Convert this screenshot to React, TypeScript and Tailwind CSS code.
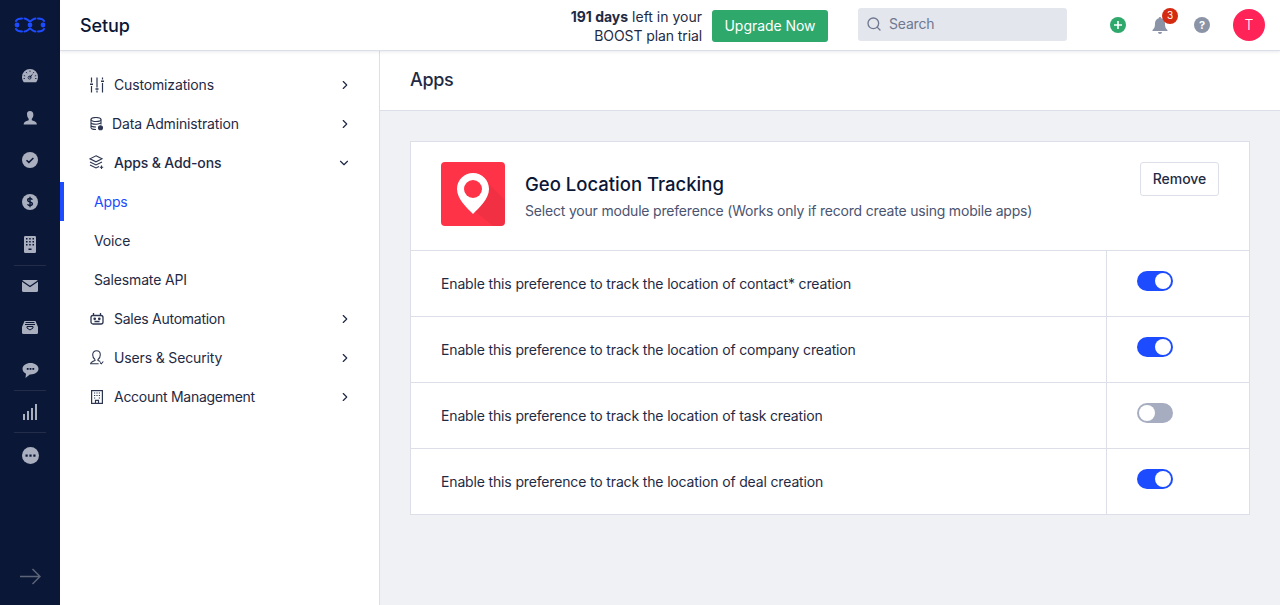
import React from "react";
import { ChevronRight, ChevronDown, Search } from "lucide-react";

function Logo() {
  return (
    <svg width="32" height="16" viewBox="0 0 32 16" fill="none">
      <circle cx="3" cy="8" r="2.400" fill="#1d4bff" />
      <circle cx="16" cy="8" r="2.400" fill="#1d4bff" />
      <circle cx="29" cy="8" r="2.400" fill="#1d4bff" />
      <g stroke="#1d4bff" strokeWidth="2" strokeLinecap="round">
        <path d="M2 4C3 2 5 1.500 8 1.500" />
        <path d="M10.500 1.500C13 1.500 14.500 4 16 4.500C17.500 4 19 1.500 21.500 1.500" />
        <path d="M24 1.500C27 1.500 29 2 30 4" />
        <path d="M2 12C3 14 5 14.500 8 14.500" />
        <path d="M10.500 14.500C13 14.500 14.500 12 16 11.500C17.500 12 19 14.500 21.500 14.500" />
        <path d="M24 14.500C27 14.500 29 14 30 12" />
      </g>
    </svg>
  );
}

function RailCell({ h, children }: { h: string; children: React.ReactNode }) {
  return <div className={`${h} w-full flex items-center justify-center`}>{children}</div>;
}

function Rail() {
  const navy = "#0b1736";
  const c = "#a9afbf";
  return (
    <div className="w-[60px] shrink-0 h-[605px] bg-[#0b1736] flex flex-col items-center">
      <div className="h-[55px] w-full flex items-start justify-center pt-[17px]"><Logo /></div>
      <RailCell h="h-[42px]">
        <svg width="16" height="14" viewBox="0 0 16 14">
          <path d="M8 0a8 8 0 0 0-8 8c0 2 .6 3.800 1.800 5.200h12.400A8 8 0 0 0 16 8a8 8 0 0 0-8-8z" fill={c} />
          <path d="M8.200 9l3-4.500-4.200 3.500z" fill={navy} />
          <circle cx="7.600" cy="8.600" r="1.500" fill="none" stroke={navy} strokeWidth=".8" />
          <path d="M8 1.500v1.500M4 3l1 1.200M12 3l-1 1.200M1.800 6.500l1.400.5M14.200 6.500l-1.400.5M1.500 9.500h1.500M13 9.500h1.500" stroke={navy} strokeWidth=".8" />
        </svg>
      </RailCell>
      <RailCell h="h-[42px]">
        <svg width="14" height="14" viewBox="0 0 14 14"><path d="M7 0c2.200 0 3.400 1.600 3.400 3.800 0 1.700-.7 3.200-1.600 4v1.500c1.800.7 4 1.400 4.600 2.500.3.600.4 1.200.5 1.800H.6c.1-.6.200-1.200.5-1.800.6-1.100 2.800-1.800 4.600-2.500V7.800c-.9-.8-1.600-2.300-1.600-4C3.600 1.600 4.800 0 7 0z" fill={c} /></svg>
      </RailCell>
      <RailCell h="h-[42px]">
        <svg width="16" height="16" viewBox="0 0 16 16"><circle cx="8" cy="8" r="8" fill={c} /><path d="M4.500 8.200l2.400 2.200 4.500-4.400" stroke={navy} strokeWidth="1.500" fill="none" /></svg>
      </RailCell>
      <RailCell h="h-[42px]">
        <svg width="16" height="16" viewBox="0 0 16 16"><circle cx="8" cy="8" r="8" fill={c} /><path d="M10.300 5.700C10 4.900 9.100 4.500 8 4.500c-1.300 0-2.300.6-2.300 1.700 0 2.400 4.700 1.200 4.700 3.600 0 1.100-1 1.700-2.400 1.700-1.200 0-2.100-.5-2.400-1.400M8 2.800v10.400" stroke={navy} strokeWidth="1.400" fill="none" /></svg>
      </RailCell>
      <RailCell h="h-[42px]">
        <svg width="12" height="17" viewBox="0 0 12 17"><rect width="12" height="17" rx="1.200" fill={c} /><g fill={navy}><rect x="2" y="2" width="1.500" height="1.500" /><rect x="5.200" y="2" width="1.500" height="1.500" /><rect x="8.500" y="2" width="1.500" height="1.500" /><rect x="2" y="5" width="1.500" height="1.500" /><rect x="5.200" y="5" width="1.500" height="1.500" /><rect x="8.500" y="5" width="1.500" height="1.500" /><rect x="2" y="8" width="1.500" height="1.500" /><rect x="5.200" y="8" width="1.500" height="1.500" /><rect x="8.500" y="8" width="1.500" height="1.500" /><rect x="4.500" y="12.500" width="3" height="1.500" /></g></svg>
      </RailCell>
      <div className="w-8 h-px bg-[#232d49]" />
      <RailCell h="h-[40px]">
        <svg width="16" height="12" viewBox="0 0 16 12"><rect width="16" height="12" rx="1.500" fill={c} /><path d="M0 1l8 5.500L16 1" stroke={navy} strokeWidth="1.200" fill="none" /></svg>
      </RailCell>
      <RailCell h="h-[42px]">
        <svg width="16" height="13" viewBox="0 0 16 13"><path d="M2.500 0h11L16 6V11.500a1.500 1.500 0 0 1-1.500 1.500h-13A1.500 1.500 0 0 1 0 11.500V6z" fill={c} /><path d="M3.500 1.500h9M3 3.500h10M5 5.500h6v1.500l-3 2-3-2z" stroke={navy} strokeWidth="1" fill="none" /></svg>
      </RailCell>
      <div className="h-[42px] w-full flex items-center justify-center pt-[2px]">
        <svg width="17" height="15" viewBox="0 0 16 15"><path d="M8 0c4.400 0 8 2.500 8 5.700s-3.600 5.700-8 5.700h-.7L3 15l.5-4.300C1.400 9.700 0 7.900 0 5.700 0 2.500 3.600 0 8 0z" fill={c} /><g fill={navy}><rect x="4.300" y="5" width="1.800" height="1.800" /><rect x="7.100" y="5" width="1.800" height="1.800" /><rect x="9.900" y="5" width="1.800" height="1.800" /></g></svg>
      </div>
      <div className="w-8 h-px bg-[#232d49]" />
      <RailCell h="h-[41px]">
        <svg width="14" height="16" viewBox="0 0 14 16" fill={c}><rect x="0" y="10" width="2" height="6" /><rect x="4" y="7" width="2" height="9" /><rect x="8" y="4" width="2" height="12" /><rect x="12" y="0" width="2" height="16" /></svg>
      </RailCell>
      <div className="w-8 h-px bg-[#232d49]" />
      <div className="h-[42px] w-full flex items-center justify-center pt-[2px]">
        <svg width="17" height="17" viewBox="0 0 17 17"><circle cx="8.500" cy="8.500" r="8.500" fill={c} /><g fill={navy}><rect x="3.500" y="7.500" width="2.200" height="2.200" /><rect x="7.400" y="7.500" width="2.200" height="2.200" /><rect x="11.300" y="7.500" width="2.200" height="2.200" /></g></svg>
      </div>
      <div className="mt-auto pb-[20px] flex justify-center">
        <svg width="21" height="17" viewBox="0 0 21 17" fill="none" stroke="#5c6478" strokeWidth="1.500"><path d="M0 8.500h20M12.500 1l7.500 7.500-7.500 7.500" /></svg>
      </div>
    </div>
  );
}

const g = { fill: "none", stroke: "#2c3650", strokeWidth: 1.100 };

const icons: Record<string, React.ReactNode> = {
  custom: (
    <svg width="14" height="16" viewBox="0 0 14 16" fill="none" stroke="#2c3650" strokeWidth="1.200">
      <path d="M1.500 0.500v5M1.500 9v6.500M7 0.500v10M7 13.500v2M12.500 0.500v2M12.500 6v9.500" />
      <path d="M0 7.200h3M5.500 12h3M11 4.300h3" strokeWidth="1.600" />
    </svg>
  ),
  data: (
    <svg width="14" height="14" viewBox="0 0 14 14" {...g}>
      <ellipse cx="6" cy="2.500" rx="5" ry="2" />
      <path d="M1 2.500v8c0 1.100 2.200 2 5 2M11 2.500v5M1 5.200c0 1.100 2.200 2 5 2s5-.9 5-2M1 8c0 1.100 2.200 2 5 2" />
      <circle cx="10.500" cy="10.800" r="2" fill="#2c3650" />
    </svg>
  ),
  apps: (
    <svg width="15" height="15" viewBox="0 0 15 15" {...g}>
      <path d="M7 .8l6 3-6 3-6-3zM1 7l6 3 6-3M1 10l6 3 3-1.500" />
      <path d="M12.500 10.500v3.500M10.800 12.200h3.400" />
    </svg>
  ),
  auto: (
    <svg width="14" height="14" viewBox="0 0 14 14" {...g} strokeWidth={1.300}>
      <rect x="1" y="3.500" width="12" height="8.500" rx="2" />
      <path d="M3.500 1v2.500M10.500 1v2.500M4.500 9.500h5" />
      <circle cx="4.700" cy="6.800" r=".7" fill="#2c3650" />
      <circle cx="9.300" cy="6.800" r=".7" fill="#2c3650" />
    </svg>
  ),
  users: (
    <svg width="14" height="15" viewBox="0 0 14 15" {...g}>
      <path d="M5 9.500c-1.500-1-2.300-2.700-2.300-4.700C2.700 2.400 4.200.8 6.500.8s3.800 1.600 3.800 4c0 2-.8 3.700-2.300 4.700v1c1 .3 1.700.6 2.300.9" />
      <path d="M5 9.500v1C3 11.200.8 12 .6 13.800h8" />
      <path d="M10 12.500l1.300 1.300 2-2.300" />
    </svg>
  ),
  account: (
    <svg width="12" height="14" viewBox="0 0 12 14" {...g} strokeWidth={1.200}>
      <rect x=".6" y=".6" width="10.800" height="12.800" />
      <path d="M3 3h1.200M5.400 3h1.200M7.800 3H9M3 5.500h1.200M5.400 5.500h1.200M7.800 5.500H9M3 8h1.200M7.800 8H9M4.500 13.400v-3h3v3" />
    </svg>
  ),
};

function NavRow({ icon, label, open, medium, gap = "gap-[10px]", tight }: { icon: string; label: string; open?: boolean; medium?: boolean; gap?: string; tight?: boolean }) {
  return (
    <div className="h-[39px] flex items-center pl-[29px] pr-[27px]">
      <div className={`flex items-center ${gap} flex-1 text-sm text-[#1f2a44] ${tight ? "tracking-[-0.27px]" : "tracking-[-0.15px]"} ${medium ? "font-medium" : ""}`}>
        <span className="flex w-[15px] justify-center">{icons[icon]}</span>
        <span>{label}</span>
      </div>
      {open ? (
        <ChevronDown className="w-[14px] h-[14px] text-[#1f2a44] mr-[1px]" strokeWidth={2} />
      ) : (
        <ChevronRight className="w-[14px] h-[14px] text-[#1f2a44]" strokeWidth={2} />
      )}
    </div>
  );
}

function SubRow({ label, active }: { label: string; active?: boolean }) {
  return (
    <div className={`h-[39px] flex items-center pl-[30px] text-sm tracking-[-0.15px] border-l-4 ${active ? "border-[#1d4bff] text-[#1d4bff]" : "border-transparent text-[#1f2a44]"}`}>
      {label}
    </div>
  );
}

function Sidebar() {
  return (
    <div className="w-[320px] shrink-0 bg-white border-r border-[#dcdfe8] pt-[14px]">
      <NavRow icon="custom" label="Customizations" />
      <NavRow icon="data" label="Data Administration" gap="gap-2" />
      <NavRow icon="apps" label="Apps & Add-ons" open medium />
      <SubRow label="Apps" active />
      <SubRow label="Voice" />
      <SubRow label="Salesmate API" />
      <NavRow icon="auto" label="Sales Automation" tight />
      <NavRow icon="users" label="Users & Security" />
      <NavRow icon="account" label="Account Management" tight />
    </div>
  );
}

function Toggle({ on }: { on: boolean }) {
  return (
    <div className={`w-9 h-5 rounded-full p-0.5 flex ${on ? "bg-[#1d4bff] justify-end" : "bg-[#a7adc1] justify-start"}`}>
      <div className="w-4 h-4 rounded-full bg-white" />
    </div>
  );
}

function PrefRow({ label, on }: { label: string; on: boolean }) {
  return (
    <div className="h-[66px] flex border-t border-[#dcdfe8]">
      <div className="flex-1 flex items-center pl-[30px] text-sm tracking-[-0.15px] text-[#1f2a44]">{label}</div>
      <div className="w-[143px] border-l border-[#dcdfe8] pl-[30px] pt-5">
        <Toggle on={on} />
      </div>
    </div>
  );
}

function Header() {
  return (
    <div className="relative z-10 h-[51px] shrink-0 bg-white border-b border-[#dcdfe8] shadow-[0_1px_3px_rgba(30,40,80,0.1)] flex items-center pl-5 pr-[15px]">
      <div className="text-lg font-medium text-[#0b1736] flex-1 pt-0.5 tracking-[-0.1px]">Setup</div>
      <div className="text-sm leading-[19px] text-[#1f2a44] text-right mr-[10px] mt-[2px]">
        <div><span className="font-bold">191 days</span> left in your</div>
        <div className="tracking-[-0.1px]">BOOST plan trial</div>
      </div>
      <div className="w-[116px] h-8 rounded-[3px] bg-[#2fa86c] text-white text-sm tracking-[-0.05px] flex items-center justify-center mr-[30px] mt-0.5">Upgrade Now</div>
      <div className="w-[209px] h-[33px] rounded-[3px] bg-[#e4e6ed] flex items-center pl-2 gap-[7px] text-sm tracking-[-0.2px] text-[#6f7890] mr-[43px] -mt-[2px]">
        <Search className="w-4 h-4 text-[#6f7890]" strokeWidth={2} />
        Search
      </div>
      <div className="w-4 h-4 rounded-full bg-[#2fa86c] flex items-center justify-center mr-[26px]">
        <svg width="8" height="8" viewBox="0 0 8 8" stroke="white" strokeWidth="1.600"><path d="M4 0v8M0 4h8" /></svg>
      </div>
      <div className="relative mr-[26px] flex">
        <svg width="16" height="17" viewBox="0 0 16 17" fill="#8b93a7"><path d="M8 0a1.300 1.300 0 0 1 1.300 1.300C11.800 2 13 4 13 6.500c0 4 1 5 2.500 6.500v1H.5v-1C2 11.500 3 10.500 3 6.500 3 4 4.200 2 6.700 1.300A1.300 1.300 0 0 1 8 0zM6 15h4a2 2 0 0 1-4 0z" /></svg>
        <div className="absolute -top-[9px] left-[10px] w-4 h-4 rounded-full bg-[#d42a12] text-white text-[10px] flex items-center justify-center">3</div>
      </div>
      <div className="w-4 h-4 rounded-full bg-[#8b93a7] text-white text-[11px] font-bold flex items-center justify-center mr-[23px]">?</div>
      <div className="w-8 h-8 rounded-full bg-[#ff2358] text-white text-sm font-light flex items-center justify-center">T</div>
    </div>
  );
}

function PinLogo() {
  return (
    <div className="w-16 h-16 rounded-[4px] bg-[#ff3347] overflow-hidden">
      <svg width="64" height="64" viewBox="0 0 64 64">
        <path d="M44 18L64 38V64H52L32 48z" fill="#000" opacity=".05" />
        <path d="M32 11c9 0 16 7 16 16 0 10-10 19-16 25-6-6-16-15-16-25 0-9 7-16 16-16z" fill="#fff" />
        <circle cx="32" cy="27" r="9" fill="#ff3347" />
      </svg>
    </div>
  );
}

export default function App() {
  return (
    <div className="flex h-[605px] w-[1280px] overflow-hidden font-['Inter',sans-serif] bg-white">
      <Rail />
      <div className="flex-1 flex flex-col min-w-0">
        <Header />
        <div className="flex flex-1 min-h-0">
          <Sidebar />
          <div className="flex-1 flex flex-col bg-[#eff1f5]">
            <div className="h-[60px] bg-white border-b border-[#dcdfe8] flex items-center pl-[30px] pb-[2px] text-lg font-medium tracking-[-0.3px] text-[#1f2a44]">Apps</div>
            <div className="px-[30px] pt-[30px]">
              <div className="bg-white border border-[#dcdfe8]">
                <div className="h-[108px] flex pl-[30px] pr-[30px] pt-5">
                  <PinLogo />
                  <div className="flex-1 pl-5 pt-[9px]">
                    <div className="text-[18.5px] font-medium leading-[26px] text-[#0b1736]">Geo Location Tracking</div>
                    <div className="text-sm tracking-[-0.19px] leading-[20px] mt-[4px] text-[#4a5470]">Select your module preference (Works only if record create using mobile apps)</div>
                  </div>
                  <div className="w-[79px] h-[34px] border border-[#dcdfe8] rounded-[3px] flex items-center justify-center text-sm font-medium tracking-[-0.05px] text-[#1f2a44]">Remove</div>
                </div>
                <PrefRow label="Enable this preference to track the location of contact* creation" on />
                <PrefRow label="Enable this preference to track the location of company creation" on />
                <PrefRow label="Enable this preference to track the location of task creation" on={false} />
                <PrefRow label="Enable this preference to track the location of deal creation" on />
              </div>
            </div>
          </div>
        </div>
      </div>
    </div>
  );
}
